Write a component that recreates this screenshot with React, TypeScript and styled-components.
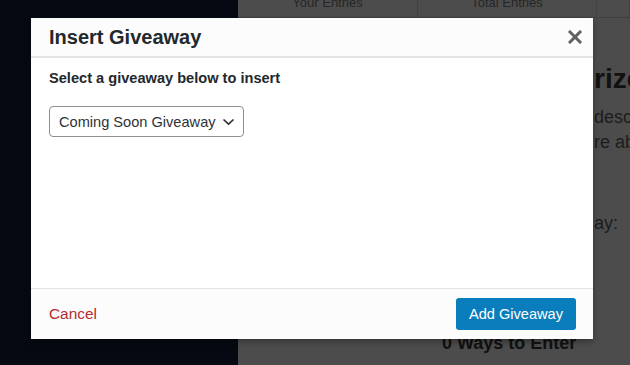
import React from "react";
import styled, { createGlobalStyle } from "styled-components";

const Global = createGlobalStyle`
  html, body { margin: 0; padding: 0; }
  body { font-family: "Liberation Sans", Arial, sans-serif; width: 630px; height: 365px; overflow: hidden; }
`;

const Page = styled.div`
  position: relative;
  display: flex;
  width: 630px;
  height: 365px;
  overflow: hidden;
`;

const Sidebar = styled.div`
  width: 238px;
  flex: none;
  background: #050a12;
`;

const Content = styled.div`
  flex: 1;
  display: flex;
  flex-direction: column;
  background: #4c4c4c;
  overflow: hidden;
  color: #1e1e1e;
`;

const TableHead = styled.div`
  display: flex;
  height: 22px;
  margin-top: -5px;
  border-bottom: 1px solid #3f3f3f;
  flex: none;
`;

const HeadCell = styled.div<{ $w?: number }>`
  width: ${(p) => (p.$w ? `${p.$w}px` : "auto")};
  flex: ${(p) => (p.$w ? "none" : "1")};
  border-right: 1px solid #434343;
  text-align: center;
  font-size: 13px;
  line-height: 15px;
  color: #262626;
  white-space: nowrap;
`;

const Section = styled.div`
  padding-left: 356px;
  display: flex;
  flex-direction: column;
  white-space: nowrap;
`;

const PrizeHeading = styled.div`
  margin-top: 45px;
  font-size: 28px;
  line-height: 32px;
  font-weight: 700;
  color: #111;
`;

const DescLine = styled.div<{ $gap?: number }>`
  margin-top: ${(p) => p.$gap ?? 0}px;
  font-size: 18px;
  line-height: 25px;
  color: #1c1c1c;
`;

const WaysTitle = styled.div`
  margin-top: 96px;
  padding-left: 204px;
  font-size: 18px;
  line-height: 22px;
  font-weight: 700;
  color: #111;
  white-space: nowrap;
`;

const Modal = styled.div`
  position: absolute;
  left: 31px;
  top: 18px;
  width: 562px;
  height: 321px;
  background: #fff;
  display: flex;
  flex-direction: column;
  box-shadow: 0 3px 6px rgba(0, 0, 0, 0.3);
`;

const Header = styled.div`
  height: 38px;
  flex: none;
  display: flex;
  align-items: center;
  justify-content: space-between;
  padding: 0 11px 0 18px;
  background: #fcfcfc;
  border-bottom: 2px solid #e4e4e4;
`;

const Title = styled.h1`
  margin: 0;
  font-size: 20px;
  font-weight: 700;
  color: #23282d;
`;

const CloseButton = styled.button`
  border: none;
  background: none;
  padding: 0;
  width: 14px;
  height: 14px;
  display: flex;
  align-items: center;
  justify-content: center;
  cursor: pointer;
`;

const Body = styled.div`
  flex: 1;
  padding: 10px 18px 0;
  display: flex;
  flex-direction: column;
  align-items: flex-start;
`;

const Label = styled.div`
  font-size: 14.6px;
  line-height: 20px;
  font-weight: 700;
  color: #23282d;
`;

const SelectBox = styled.div`
  margin-top: 18px;
  width: 195px;
  height: 31px;
  box-sizing: border-box;
  border: 1px solid #8c8f94;
  border-radius: 4px;
  display: flex;
  align-items: center;
  justify-content: space-between;
  padding: 0 8px 0 9px;
  font-size: 14.6px;
  color: #2c3338;
  white-space: nowrap;
`;

const Footer = styled.div`
  height: 50px;
  flex: none;
  border-top: 1px solid #e2e2e2;
  background: #fcfcfc;
  display: flex;
  align-items: center;
  justify-content: space-between;
  padding: 0 17px 0 18px;
`;

const CancelLink = styled.a`
  font-size: 15.4px;
  color: #b32d2e;
  text-decoration: none;
  cursor: pointer;
`;

const PrimaryButton = styled.button`
  height: 32px;
  width: 120px;
  border: none;
  border-radius: 3px;
  background: #0a7dbc;
  color: #fff;
  font-family: "Liberation Sans", Arial, sans-serif;
  font-size: 14.6px;
  padding: 0;
  cursor: pointer;
`;

export default function App() {
  return (
    <>
      <Global />
      <Page>
        <Sidebar />
        <Content>
          <TableHead>
            <HeadCell $w={179}>Your Entries</HeadCell>
            <HeadCell $w={178}>Total Entries</HeadCell>
            <HeadCell />
          </TableHead>
          <Section>
            <PrizeHeading>rize</PrizeHeading>
            <DescLine $gap={10}>description</DescLine>
            <DescLine>re about</DescLine>
            <DescLine $gap={56}>ay:</DescLine>
          </Section>
          <WaysTitle>0 Ways to Enter</WaysTitle>
        </Content>
        <Modal>
          <Header>
            <Title>Insert Giveaway</Title>
            <CloseButton aria-label="Close">
              <svg width="14" height="14" viewBox="0 0 14 14">
                <path d="M2 2 L12 12 M12 2 L2 12" stroke="#606060" strokeWidth="3" strokeLinecap="square" />
              </svg>
            </CloseButton>
          </Header>
          <Body>
            <Label>Select a giveaway below to insert</Label>
            <SelectBox>
              <span>Coming Soon Giveaway</span>
              <svg width="13" height="8" viewBox="0 0 13 8">
                <path d="M1.5 1.5 L6.5 6.2 L11.5 1.5" fill="none" stroke="#2c3338" strokeWidth="1.7" />
              </svg>
            </SelectBox>
          </Body>
          <Footer>
            <CancelLink>Cancel</CancelLink>
            <PrimaryButton>Add Giveaway</PrimaryButton>
          </Footer>
        </Modal>
      </Page>
    </>
  );
}
